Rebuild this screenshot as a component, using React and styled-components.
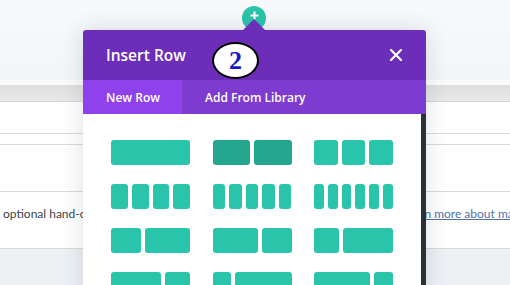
import React from "react";
import styled, { createGlobalStyle } from "styled-components";

const GlobalStyle = createGlobalStyle`
  html, body {
    margin: 0;
    padding: 0;
    background: #ffffff;
    font-family: "Open Sans", "Liberation Sans", sans-serif;
  }
`;

const Page = styled.div`
  position: relative;
  width: 510px;
  height: 285px;
  overflow: hidden;
  display: flex;
  flex-direction: column;
  background: #eef0f4;
`;

const TopArea = styled.div`
  height: 80px;
  flex: none;
  background: linear-gradient(180deg, #f8f9fb 0%, #f3f5f8 100%);
`;

const WhiteGap = styled.div`
  height: 5px;
  flex: none;
  background: #fbfbfc;
`;

const GrayBar = styled.div`
  height: 16px;
  flex: none;
  background: linear-gradient(180deg, #dedede 0%, #e9e9e9 100%);
  border-bottom: 1px solid #d3d3d3;
`;

const TableRow = styled.div`
  flex: none;
  height: ${(p) => p.h}px;
  background: #ffffff;
  border-bottom: 1px solid #d9d9d9;
  display: flex;
  align-items: flex-start;
  font-family: Lato, "Liberation Sans", sans-serif;
  font-size: 12px;
  color: #3c434a;
  white-space: nowrap;
`;

const Desc = styled.span`
  flex: none;
  width: 402px;
  padding-left: 3px;
  padding-top: 14px;
  box-sizing: border-box;
  overflow: hidden;
`;

const MoreLink = styled.a`
  padding-top: 14px;
  color: #4f73a8;
  text-decoration: underline;
`;

const Modal = styled.div`
  position: absolute;
  left: 83px;
  top: 30px;
  width: 343px;
  height: 270px;
  display: flex;
  flex-direction: column;
  border-radius: 3px 3px 0 0;
  box-shadow: 0 0 22px rgba(40, 60, 90, 0.16);
  background: #ffffff;
`;

const Header = styled.div`
  position: relative;
  height: 50px;
  flex: none;
  display: flex;
  align-items: center;
  justify-content: space-between;
  padding: 0 23px;
  background: #6c2eb9;
  border-radius: 3px 3px 0 0;
  color: #ffffff;

  &::before {
    content: "";
    position: absolute;
    left: 160px;
    top: -11px;
    border-left: 11px solid transparent;
    border-right: 11px solid transparent;
    border-bottom: 11px solid #6c2eb9;
  }
`;

const Title = styled.div`
  font-size: 15.5px;
  font-weight: 600;
`;

const CloseIcon = styled.svg`
  width: 12px;
  height: 12px;
  margin-right: 1px;
`;

const Tabs = styled.div`
  height: 34px;
  flex: none;
  display: flex;
  background: #7e3bd0;
`;

const Tab = styled.div`
  display: flex;
  align-items: center;
  padding: 0 0 0 23px;
  width: ${(p) => (p.active ? "99px" : "auto")};
  box-sizing: border-box;
  background: ${(p) => (p.active ? "#8f42ec" : "transparent")};
  color: #ffffff;
  font-size: 12px;
  font-weight: 600;
  white-space: nowrap;
`;

const Body = styled.div`
  flex: 1;
  display: flex;
  min-height: 0;
`;

const LayoutGrid = styled.div`
  flex: 1;
  display: grid;
  grid-template-columns: repeat(3, 79px);
  grid-auto-rows: 25px;
  column-gap: 22.5px;
  row-gap: 19px;
  padding: 26px 0 0 28px;
  align-content: start;
`;

const Layout = styled.div`
  display: flex;
  gap: 4px;
`;

const Column = styled.div`
  flex: ${(p) => p.f};
  border-radius: 3px;
  background: ${(p) => (p.hover ? "#25a78f" : "#29c4a9")};
`;

const Scrollbar = styled.div`
  width: 5px;
  flex: none;
  background: #2c3136;
`;

const AddButton = styled.div`
  position: absolute;
  left: 242px;
  top: 6px;
  width: 24px;
  height: 24px;
  border-radius: 50%;
  background: #29c4a9;
  display: flex;
  justify-content: center;
  padding-top: 5px;
  box-sizing: border-box;
`;

const StepBadge = styled.div`
  position: absolute;
  left: 212px;
  top: 42px;
  width: 47px;
  height: 37px;
  box-sizing: border-box;
  border: 2px solid #000000;
  border-radius: 50%;
  background: #ffffff;
  display: flex;
  align-items: center;
  justify-content: center;
  font-family: "Liberation Serif", "Times New Roman", serif;
  font-weight: bold;
  font-size: 26px;
  color: #1717c9;
  line-height: 1;
`;

const layouts = [
  [[1]],
  [[1, 1], true],
  [[1, 1, 1]],
  [[1, 1, 1, 1]],
  [[1, 1, 1, 1, 1]],
  [[1, 1, 1, 1, 1, 1]],
  [[2, 3]],
  [[3, 2]],
  [[1, 2]],
  [[2, 1]],
  [[1, 3]],
  [[3, 1]],
];

export default function App() {
  return (
    <>
      <GlobalStyle />
      <Page>
        <TopArea />
        <WhiteGap />
        <GrayBar />
        <TableRow h={31} />
        <TableRow h={10} />
        <TableRow h={46} />
        <TableRow h={56}>
          <Desc>optional hand-crafted layouts are available for every new page</Desc>
          <MoreLink>Learn more about ma</MoreLink>
        </TableRow>

        <AddButton>
          <svg width="9" height="9" viewBox="0 0 9 9">
            <path d="M4.5 0.5v8M0.5 4.5h8" stroke="#ffffff" strokeWidth="2" />
          </svg>
        </AddButton>

        <Modal>
          <Header>
            <Title>Insert Row</Title>
            <CloseIcon viewBox="0 0 12 12">
              <path d="M1 1L11 11M11 1L1 11" stroke="#ffffff" strokeWidth="2.2" strokeLinecap="round" />
            </CloseIcon>
          </Header>
          <Tabs>
            <Tab active>New Row</Tab>
            <Tab>Add From Library</Tab>
          </Tabs>
          <Body>
            <LayoutGrid>
              {layouts.map(([cols, hover], i) => (
                <Layout key={i}>
                  {cols.map((f, j) => (
                    <Column key={j} f={f} hover={hover} />
                  ))}
                </Layout>
              ))}
            </LayoutGrid>
            <Scrollbar />
          </Body>
        </Modal>

        <StepBadge>2</StepBadge>
      </Page>
    </>
  );
}
